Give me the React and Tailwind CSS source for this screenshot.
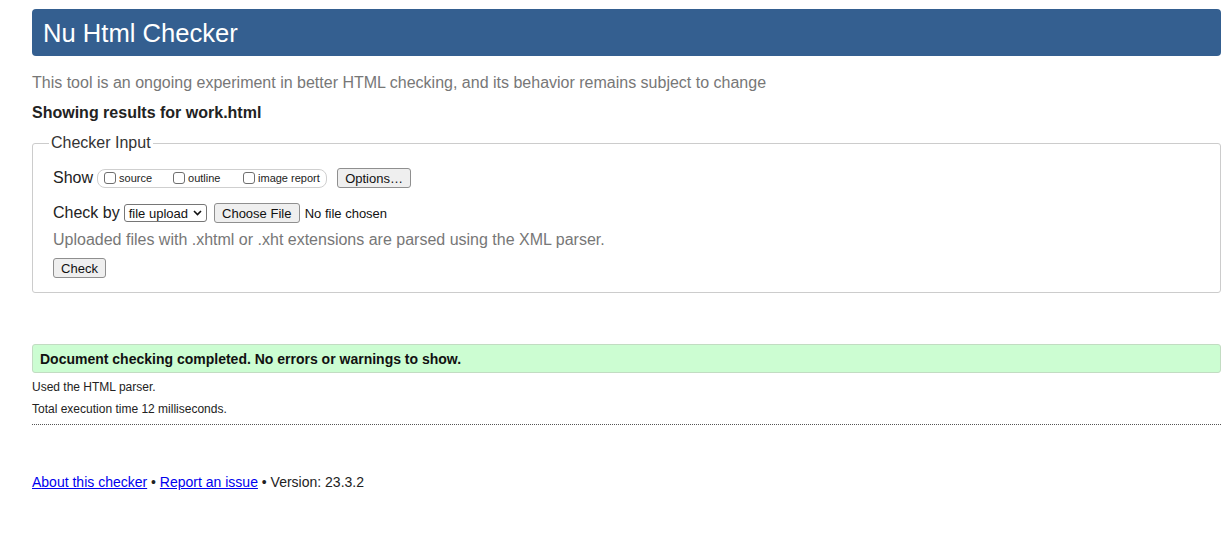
import React from "react";

function Box({ label }) {
  return (
    <span className="flex items-center">
      <span className="h-[12px] w-[12px] rounded-[3px] border border-[#6f6f6f] bg-white" />
      <span className="ml-[3px] text-[11px] leading-[13px] text-[#222]">{label}</span>
    </span>
  );
}

function NativeButton({ children, className = "" }) {
  return (
    <button
      type="button"
      className={`flex items-center justify-center rounded-[3px] border border-[#8f8f8f] bg-[#efefef] text-[13px] leading-[15px] text-[#111] ${className}`}
    >
      {children}
    </button>
  );
}

export default function App() {
  return (
    <div className="min-h-[554px] bg-white pt-[9px] pl-[32px] pr-[10px] font-['Liberation_Sans',Arial,sans-serif] text-[#222]">
      <div className="flex h-[47px] items-center rounded-[4px] bg-[#345f90] pl-[11px]">
        <h1 className="text-[25.6px] leading-[30px] text-white">Nu Html Checker</h1>
      </div>

      <p className="mt-[18px] text-[16px] leading-[18px] text-[#777]">
        This tool is an ongoing experiment in better HTML checking, and its behavior remains subject to change
      </p>
      <p className="mt-[12px] text-[16px] font-bold leading-[18px] text-[#222]">
        Showing results for work.html
      </p>

      <fieldset className="mt-[12px] rounded-[3px] border border-[#cccccc] pl-[20px] pb-[14px]">
        <legend className="-ml-[4px] px-[2px] text-[16px] leading-[18px] text-[#333]">Checker Input</legend>

        <div className="mt-[16px] flex h-[20px] items-center">
          <span className="text-[16px] leading-[18px]">Show</span>
          <div className="ml-[4px] flex h-[19px] w-[230px] items-center rounded-[8px] border border-[#cfcfcf] pl-[6px]">
            <div className="w-[69px]">
              <Box label="source" />
            </div>
            <div className="w-[70px]">
              <Box label="outline" />
            </div>
            <Box label="image report" />
          </div>
          <NativeButton className="ml-[10px] h-[20px] w-[74px]">Options…</NativeButton>
        </div>

        <div className="mt-[15px] flex h-[20px] items-center">
          <span className="text-[16px] leading-[18px]">Check by</span>
          <div className="ml-[4px] flex h-[18px] w-[83px] items-center justify-between rounded-[3px] border border-[#767676] bg-white pl-[4px] pr-[4px] text-[13px] leading-[15px] text-[#111]">
            <span>file upload</span>
            <svg width="9" height="6" viewBox="0 0 9 6" fill="none">
              <path d="M1 1l3.5 3.5L8 1" stroke="#111" strokeWidth="1.6" />
            </svg>
          </div>
          <NativeButton className="ml-[7px] h-[20px] w-[86px]">Choose File</NativeButton>
          <span className="ml-[5px] text-[13px] leading-[15px] text-[#111]">No file chosen</span>
        </div>

        <p className="mt-[8px] text-[16px] leading-[18px] text-[#777]">
          Uploaded files with .xhtml or .xht extensions are parsed using the XML parser.
        </p>

        <NativeButton className="mt-[9px] h-[20px] w-[53px]">Check</NativeButton>
      </fieldset>

      <div className="mt-[51px] flex h-[29px] items-center rounded-[3px] border border-[#c2dcc2] bg-[#ccfdd2] pl-[7px]">
        <span className="text-[14px] font-bold leading-[16px] text-[#111]">
          Document checking completed. No errors or warnings to show.
        </span>
      </div>

      <p className="mt-[7px] text-[12px] leading-[14px] text-[#222]">Used the HTML parser.</p>
      <p className="mt-[8px] text-[12px] leading-[14px] text-[#222]">Total execution time 12 milliseconds.</p>

      <div className="mt-[8px] border-t border-dotted border-[#555]" />

      <p className="mt-[49px] text-[14px] leading-[16px] text-[#222]">
        <a href="#about" className="text-[#0000ee] underline">About this checker</a>
        {" • "}
        <a href="#issue" className="text-[#0000ee] underline">Report an issue</a>
        {" • Version: 23.3.2"}
      </p>
    </div>
  );
}
